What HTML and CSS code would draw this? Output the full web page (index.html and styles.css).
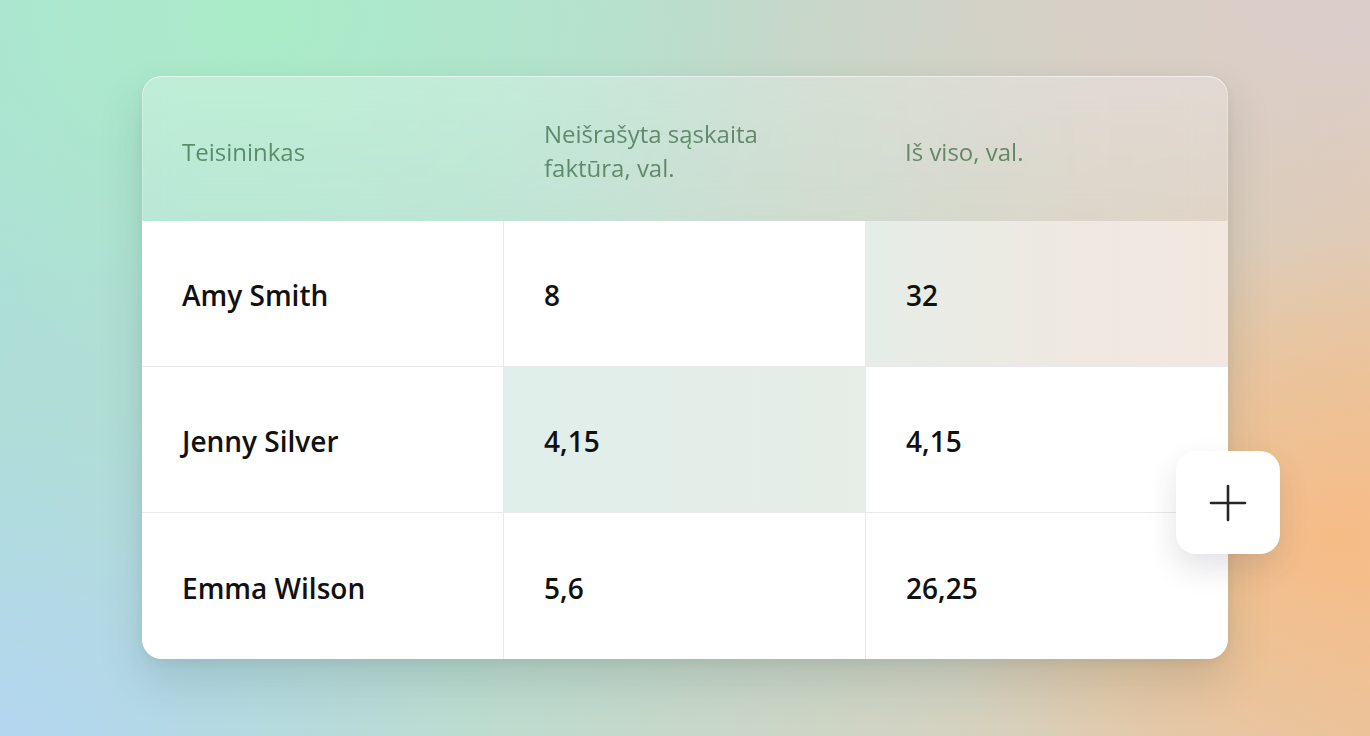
FILE: index.html
```html
<!DOCTYPE html>
<html lang="lt">
<head>
<meta charset="utf-8">
<title>Teisininkai</title>
<link rel="stylesheet" href="styles.css">
</head>
<body>
<main class="stage">
  <div class="card">
    <div class="head-row">
      <div class="hcell">Teisininkas</div>
      <div class="hcell">Neišrašyta sąskaita<br>faktūra, val.</div>
      <div class="hcell">Iš viso, val.</div>
    </div>
    <div class="row">
      <div class="cell">Amy Smith</div>
      <div class="cell">8</div>
      <div class="cell hl-peach">32</div>
    </div>
    <div class="row">
      <div class="cell">Jenny Silver</div>
      <div class="cell hl-mint">4,15</div>
      <div class="cell">4,15</div>
    </div>
    <div class="row last">
      <div class="cell">Emma Wilson</div>
      <div class="cell">5,6</div>
      <div class="cell">26,25</div>
    </div>
    <button class="add-btn" aria-label="Pridėti">
      <svg width="38" height="38" viewBox="0 0 38 38"><path d="M19 2v34M2 19h34" stroke="#262626" stroke-width="2.6" stroke-linecap="round" fill="none"/></svg>
    </button>
  </div>
</main>
</body>
</html>
```
FILE: styles.css
```css
* { box-sizing: border-box; }
html, body { margin: 0; padding: 0; }
body {
  width: 1370px;
  height: 736px;
  overflow: hidden;
  font-family: "Open Sans", "Noto Sans", sans-serif;
  background:
    radial-gradient(ellipse 420px 300px at 1340px 540px, rgba(246,188,134,1), rgba(246,188,134,0) 100%),
    radial-gradient(ellipse 600px 380px at 1370px 0px, rgba(218,206,204,1), rgba(218,206,204,0) 100%),
    radial-gradient(ellipse 520px 360px at 260px 20px, rgba(170,236,200,1), rgba(170,236,200,0) 100%),
    radial-gradient(ellipse 460px 340px at 0px 736px, rgba(180,214,240,1), rgba(180,214,240,0) 100%),
    linear-gradient(100deg, #acdfd8 0%, #bcdcd0 40%, #d2d3c2 70%, #e8c6a4 100%);
}
.stage {
  padding: 76px 0 0 142px;
}
.card {
  position: relative;
  width: 1086px;
  border-radius: 20px;
  box-shadow: 0 22px 45px rgba(40, 70, 70, 0.16), 0 4px 10px rgba(40,70,70,0.06);
}
.head-row {
  display: grid;
  grid-template-columns: 361px 362px 363px;
  height: 145px;
  border-radius: 20px 20px 0 0;
  background: linear-gradient(180deg, rgba(255,255,255,0.24), rgba(255,255,255,0.14));
  backdrop-filter: blur(18px);
  box-shadow: inset 0 1px 0 rgba(255,255,255,0.55), inset 1px 0 0 rgba(255,255,255,0.25), inset -1px 0 0 rgba(255,255,255,0.25);
}
.hcell {
  display: flex;
  align-items: center;
  padding-left: 40px;
  font-size: 24px;
  line-height: 34px;
  color: rgba(45, 95, 55, 0.68);
  padding-top: 6px;
}
.hcell:nth-child(2) { padding-left: 41px; padding-top: 4px; }
.row {
  display: grid;
  grid-template-columns: 361px 362px 363px;
  height: 146px;
  background: #fff;
  border-bottom: 1px solid #e9e9e9;
}
.row.last {
  border-bottom: none;
  border-radius: 0 0 20px 20px;
  overflow: hidden;
}
.cell {
  display: flex;
  align-items: center;
  padding-left: 40px;
  font-size: 28px;
  font-weight: 600;
  color: #111;
  border-left: 1px solid #e9e9e9;
  padding-top: 3px;
}
.cell:first-child { border-left: none; }
.hl-peach {
  background: linear-gradient(90deg, #e6ede7 0%, #ede9e2 50%, #f3e7df 100%);
}
.hl-mint {
  background: linear-gradient(90deg, #e0efeb 0%, #e3eee9 50%, #e7ede7 100%);
}
.add-btn {
  position: absolute;
  top: 375px;
  right: -52px;
  width: 104px;
  height: 103px;
  border: none;
  border-radius: 20px;
  background: #fff;
  display: flex;
  align-items: center;
  justify-content: center;
  box-shadow: 0 14px 30px rgba(60, 60, 80, 0.14);
  padding: 0;
  cursor: pointer;
}
```
